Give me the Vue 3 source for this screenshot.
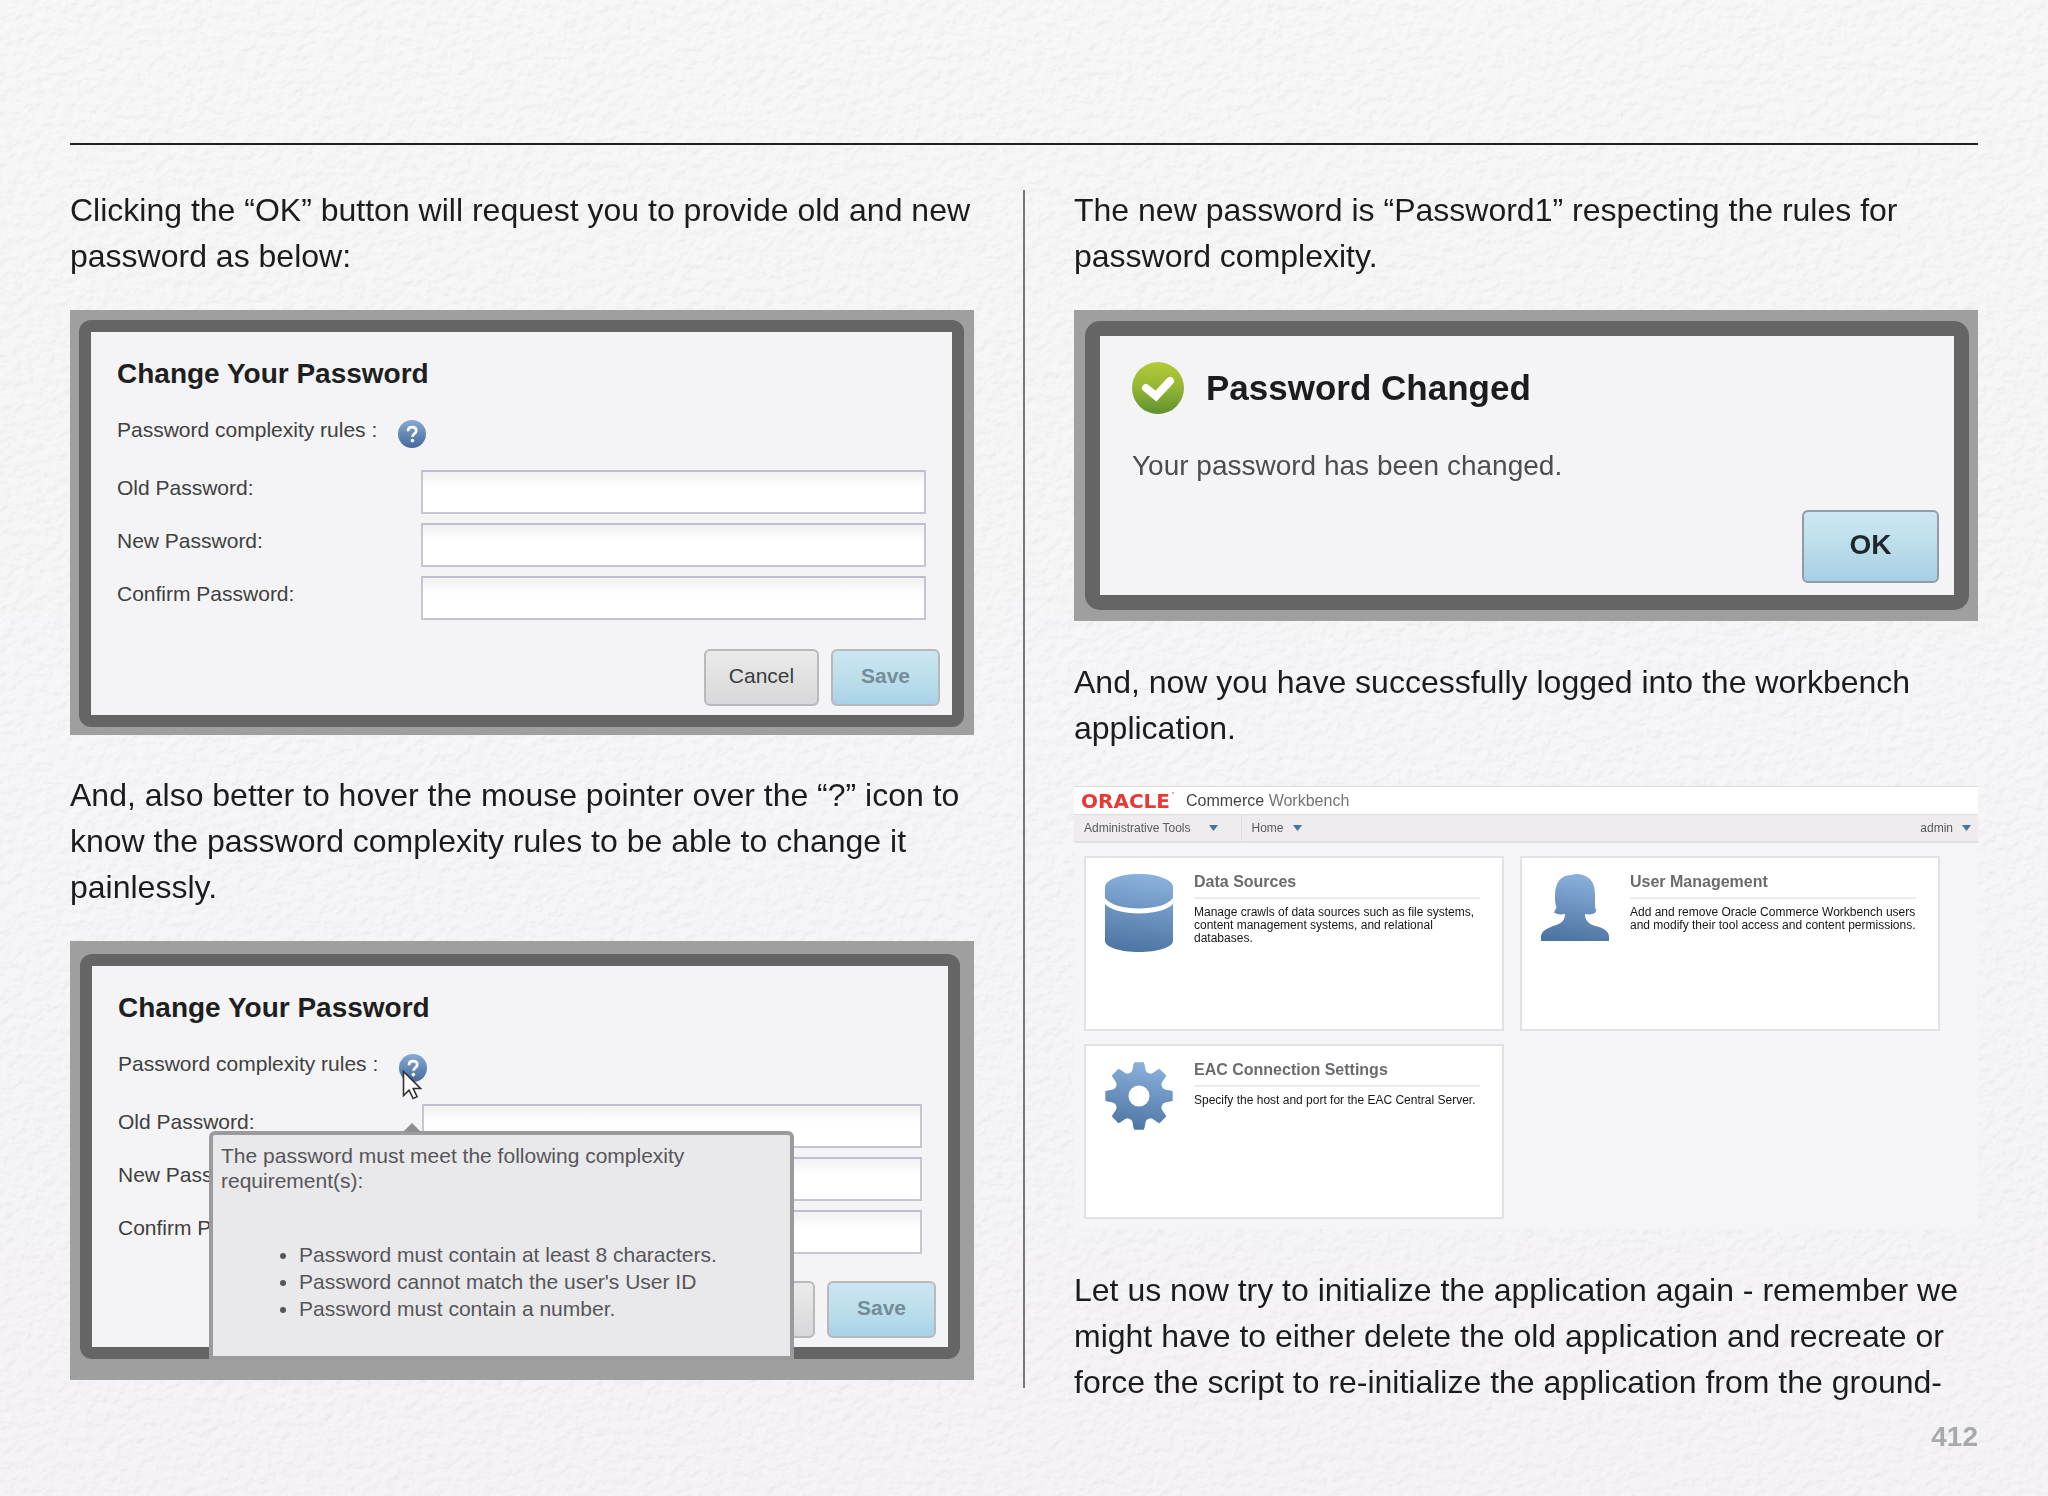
<template>
    <div class="page">
        <!-- paper grain -->
        <svg class="paper" aria-hidden="true">
            <filter id="grain" x="0" y="0" width="100%" height="100%" color-interpolation-filters="sRGB">
                <feTurbulence type="fractalNoise" baseFrequency="0.1 0.12" numOctaves="4" seed="8" result="noise" />
                <feDiffuseLighting in="noise" lighting-color="#ffffff" surfaceScale="1" diffuseConstant="1.12">
                    <feDistantLight azimuth="50" elevation="60" />
                </feDiffuseLighting>
            </filter>
            <rect width="100%" height="100%" filter="url(#grain)" />
        </svg>

        <hr class="topRule" />

        <main class="columns">
            <section class="column">
                <template v-for="d in dialogs" :key="d.id">
                    <p class="bodyText">{{ d.intro }}</p>
                    <div class="shot" :class="d.id">
                        <form class="dialog" @submit.prevent>
                            <h2 class="dialogTitle">Change Your Password</h2>
                            <div class="rulesRow">
                                <span class="rulesText">Password complexity rules :</span>
                                <button type="button" class="helpBtn" aria-label="Help">
                                    <svg viewBox="0 0 28 28" width="28" height="28">
                                        <defs>
                                            <linearGradient :id="'help' + d.id" x1="0" y1="0" x2="0" y2="1">
                                                <stop offset="0" stop-color="#86aad2" />
                                                <stop offset="1" stop-color="#45699a" />
                                            </linearGradient>
                                        </defs>
                                        <circle cx="14" cy="14" r="14" :fill="`url(#help${d.id})`" />
                                        <path d="M10 11.2C10 8.6 11.7 7.2 14.1 7.2s4.1 1.4 4.1 3.6c0 2.9-3.7 3.1-3.7 6"
                                            fill="none" stroke="#fff" stroke-width="2.8" />
                                        <circle cx="14.4" cy="20.6" r="1.8" fill="#fff" />
                                    </svg>
                                </button>
                                <svg v-if="d.tooltip" class="pointer" viewBox="0 0 20 30" width="20" height="30">
                                    <path d="M1.5 1.5v24l5.6-5.4 4 8.4 4-1.8-3.9-8.2h7.3z" fill="#fff" stroke="#333"
                                        stroke-width="1.6" />
                                </svg>
                            </div>
                            <div class="fields">
                                <template v-for="f in fields" :key="f">
                                    <label :for="d.id + f">{{ f }} Password:</label>
                                    <input :id="d.id + f" v-model="form[d.id + f]" type="password" />
                                </template>
                            </div>
                            <div class="actions">
                                <button type="button" class="btn cancel">Cancel</button>
                                <button type="submit" class="btn save">Save</button>
                            </div>
                            <div v-if="d.tooltip" class="tooltip" role="tooltip">
                                <p>The password must meet the following complexity requirement(s):</p>
                                <ul>
                                    <li v-for="r in rules" :key="r">{{ r }}</li>
                                </ul>
                            </div>
                        </form>
                    </div>
                </template>
            </section>

            <div class="divider"></div>

            <section class="column">
                <p class="bodyText">The new password is “Password1” respecting the rules for password complexity.</p>
                <div class="shot changed">
                    <div class="dialog">
                        <div class="changedHead">
                            <svg viewBox="0 0 52 52" width="52" height="52">
                                <defs>
                                    <linearGradient id="okGreen" x1="0" y1="0" x2="0" y2="1">
                                        <stop offset="0" stop-color="#b3cb3a" />
                                        <stop offset="0.5" stop-color="#94b533" />
                                        <stop offset="1" stop-color="#5f9130" />
                                    </linearGradient>
                                </defs>
                                <circle cx="26" cy="26" r="26" fill="url(#okGreen)" />
                                <path d="M14 26l10 8L38 19" fill="none" stroke="#fff" stroke-width="8"
                                    stroke-linecap="round" />
                            </svg>
                            <h2>Password Changed</h2>
                        </div>
                        <p class="changedText">Your password has been changed.</p>
                        <button type="button" class="btn ok">OK</button>
                    </div>
                </div>

                <p class="bodyText">And, now you have successfully logged into the workbench application.</p>
                <div class="workbench">
                    <header class="brandBar">
                        <span class="logo">ORACLE<i></i></span>
                        <span class="product">Commerce <span>Workbench</span></span>
                    </header>
                    <nav class="menuBar">
                        <button v-for="m in menus" :key="m" type="button" class="menuItem">
                            {{ m }}
                            <svg viewBox="0 0 9 6" width="9" height="6"><path d="M0 0h9L4.5 6z" fill="#47749f" /></svg>
                        </button>
                    </nav>
                    <div class="cards">
                        <article v-for="c in cards" :key="c.title" class="card">
                            <svg class="cardIcon" :viewBox="`0 0 68 ${c.height}`" width="68" :height="c.height">
                                <defs>
                                    <linearGradient :id="c.icon" gradientUnits="userSpaceOnUse" x1="40" y1="0" x2="28"
                                        :y2="c.height">
                                        <stop offset="0" stop-color="#8bb1dc" />
                                        <stop offset="1" stop-color="#4d75a3" />
                                    </linearGradient>
                                </defs>
                                <path v-for="p in c.paths" :key="p" :d="p" :fill="`url(#${c.icon})`"
                                    fill-rule="evenodd" />
                            </svg>
                            <div class="cardBody">
                                <h3>{{ c.title }}</h3>
                                <p>{{ c.text }}</p>
                            </div>
                        </article>
                    </div>
                </div>

                <p class="bodyText">Let us now try to initialize the application again - remember we might have to either delete the old application and recreate or force the script to re-initialize the application from the ground-</p>
            </section>
        </main>

        <footer class="pageNumber">412</footer>
    </div>
</template>

<script setup>
import { reactive } from 'vue'

const form = reactive({})
const fields = ['Old', 'New', 'Confirm']
const menus = ['Administrative Tools', 'Home', 'admin']

const dialogs = [
    { id: 'first', intro: 'Clicking the “OK” button will request you to provide old and new password as below:', tooltip: false },
    { id: 'second', intro: 'And, also better to hover the mouse pointer over the “?” icon to know the password complexity rules to be able to change it painlessly.', tooltip: true }
]

const rules = [
    'Password must contain at least 8 characters.',
    "Password cannot match the user's User ID",
    'Password must contain a number.'
]

// eight-tooth gear around a round hole
const gearPath = () => {
    const c = 34
    const pt = (r, deg) => {
        const a = (deg * Math.PI) / 180
        return `${(c + r * Math.cos(a)).toFixed(1)} ${(c + r * Math.sin(a)).toFixed(1)}`
    }
    const points = []
    for (let i = 0; i < 8; i++) {
        const m = i * 45 - 90
        points.push(pt(25, m - 18), pt(27, m - 14), pt(32, m - 10), pt(34, m - 8), pt(34, m + 8), pt(32, m + 10), pt(27, m + 14), pt(25, m + 18))
    }
    return `M${points.join('L')}ZM23.5 34a10.5 10.5 0 1 0 21 0a10.5 10.5 0 1 0 -21 0Z`
}

const cards = [
    {
        icon: 'database',
        title: 'Data Sources',
        text: 'Manage crawls of data sources such as file systems, content management systems, and relational databases.',
        height: 78,
        paths: ['M0 13C0 6 15 0 34 0s34 6 34 13v11c-5 7-19 10.5-34 10.5S5 31 0 24z', 'M0 30c6 6 19 9.5 34 9.5S62 36 68 30v37c0 6-15 11-34 11S0 73 0 67z']
    },
    {
        icon: 'person',
        title: 'User Management',
        text: 'Add and remove Oracle Commerce Workbench users and modify their tool access and content permissions.',
        height: 67,
        paths: ['M14 22C14 8 20 1 31 1c3-1.5 8-1 12 .5C51 4 54 11 54 21v13c1 1 1.5 2 1 3.5-1 2.500-6 3.5-11 2.5 0 6 3 9.500 9 11.5C62 54 67 56 68 62v5H0v-5c1-6 7-8 15-11 6-2 9-5 9-11-5 1-9 0-11-1.5.5-2 2-3 2.500-5C14 30 14 26 14 22z']
    },
    {
        icon: 'gear',
        title: 'EAC Connection Settings',
        text: 'Specify the host and port for the EAC Central Server.',
        height: 68,
        paths: [gearPath()]
    }
]
</script>

<style>
body {
    margin: 0;
    background: #f5f4f5;
}
</style>

<style scoped>
.page {
    position: relative;
    min-height: 100vh;
    box-sizing: border-box;
    padding: 143px 70px 0;
    font-family: 'Liberation Sans', Arial, sans-serif;
    color: #1c1b1d;
    background: linear-gradient(#f7f7f7, #f5f3f7);
}

.page > * {
    position: relative;
}

.page > .paper {
    position: absolute;
    inset: 0;
    width: 100%;
    height: 100%;
    opacity: 0.2;
    mix-blend-mode: multiply;
}

h2,
h3,
p,
ul {
    margin: 0;
}

button,
input {
    font-family: inherit;
}

.topRule {
    height: 2px;
    margin: 0 0 42px;
    border: none;
    background: #231f20;
}

.columns {
    display: flex;
    gap: 49px;
}

.column {
    flex: 1;
    min-width: 0;
}

.divider {
    width: 2px;
    margin: 3px 0 17px;
    background: #77767a;
}

.bodyText {
    font-size: 32px;
    line-height: 46px;
}

.shot {
    margin: 31px 0 38px;
    background: #9f9f9f;
}

.shot.first {
    padding: 10px 10px 8px 9px;
    margin-bottom: 37px;
}

.shot.second {
    padding: 13px 14px 21px 10px;
    margin-bottom: 0;
}

.dialog {
    position: relative;
    display: flex;
    flex-direction: column;
    border: 12px solid #666566;
    border-radius: 12px;
    background: #f4f4f6;
}

.dialogTitle {
    margin: 25px 26px;
    font-size: 28px;
    line-height: 34px;
    color: #1f1f1f;
}

.rulesRow {
    position: relative;
    display: flex;
    align-items: flex-end;
    gap: 21px;
    height: 32px;
    padding: 0 26px;
}

.rulesText,
.fields label {
    font-size: 21px;
    color: #404040;
}

.rulesText {
    line-height: 26px;
    padding-bottom: 5px;
}

.helpBtn {
    padding: 0;
    border: none;
    background: none;
    height: 28px;
}

.helpBtn svg,
.cardIcon {
    display: block;
}

.pointer {
    position: absolute;
    left: 310px;
    top: 20px;
    z-index: 2;
}

.fields {
    display: grid;
    grid-template-columns: 304px 1fr;
    row-gap: 9px;
    margin: 22px 26px 29px;
}

.second .fields {
    margin-bottom: 27px;
}

.fields label {
    line-height: 35px;
}

.fields input {
    box-sizing: border-box;
    width: 100%;
    height: 44px;
    border: 2px solid #c6c5d2;
    border-top-color: #bfbed0;
    background: linear-gradient(#f1f1f3, #ffffff 40%);
    outline: none;
}

.actions {
    display: flex;
    justify-content: flex-end;
    gap: 12px;
    padding: 0 12px 9px;
}

.btn {
    height: 57px;
    padding: 0 0 4px;
    border: 2px solid #b9b9bb;
    border-radius: 6px;
    font-size: 21px;
}

.cancel {
    width: 115px;
    color: #3c3c3c;
    background: linear-gradient(#ebebeb, #d8d7d9);
}

.save {
    width: 109px;
    font-weight: 700;
    color: #728c9a;
    background: linear-gradient(#cbe5f2, #bddfeb 50%, #a8d1e7);
}

.tooltip {
    position: absolute;
    left: 117px;
    top: 165px;
    width: 585px;
    height: 229px;
    box-sizing: border-box;
    padding: 8px 8px;
    border: 4px solid #9b9b9d;
    border-radius: 6px 6px 0 0;
    background: #e9e8ea;
    font-size: 21px;
    line-height: 25px;
    color: #57565a;
}

.tooltip::before {
    content: '';
    position: absolute;
    left: 190px;
    top: -12px;
    border: 9px solid transparent;
    border-top-width: 0;
    border-bottom-color: #8e8d90;
}

.tooltip p {
    width: 500px;
}

.tooltip ul {
    margin-top: 48px;
    padding-left: 78px;
    line-height: 27px;
}

.changed {
    padding: 11px 9px 11px 11px;
}

.changed .dialog {
    align-items: flex-start;
    padding: 26px 15px 12px 32px;
    border-width: 15px;
    border-radius: 15px;
}

.changedHead {
    display: flex;
    align-items: center;
    gap: 22px;
}

.changedHead h2 {
    font-size: 35px;
    line-height: 40px;
}

.changedText {
    margin: 35px 0 27px;
    font-size: 28px;
    line-height: 34px;
    color: #4d4c4e;
}

.ok {
    align-self: flex-end;
    width: 137px;
    height: 73px;
    border-color: #949ba2;
    font-size: 28px;
    font-weight: 700;
    color: #1f272c;
    background: linear-gradient(#cde6f5, #c3e2ed 30%, #a7cfe4);
}

.workbench {
    margin: 35px 0 38px;
    border-top: 1px solid #dcdbdd;
    background: #f5f4f7;
}

.brandBar {
    display: flex;
    align-items: center;
    gap: 16px;
    height: 27px;
    padding-left: 7px;
    background: #ffffff;
}

.logo {
    position: relative;
    font-family: 'DejaVu Sans', sans-serif;
    font-size: 20px;
    font-weight: 700;
    line-height: 26px;
    color: #e63a36;
}

.logo i {
    position: absolute;
    right: -4px;
    top: 4px;
    width: 2px;
    height: 2px;
    border-radius: 50%;
    background: #ee8d89;
}

.product {
    font-size: 16px;
    color: #454547;
}

.product span {
    color: #737276;
}

.menuBar {
    display: flex;
    height: 29px;
    box-sizing: border-box;
    border-top: 1px solid #dddce0;
    border-bottom: 2px solid #e1e0e4;
    background: #eeecef;
}

.menuItem {
    display: flex;
    align-items: center;
    gap: 9px;
    padding: 0 23px 0 10px;
    border: none;
    background: none;
    font-size: 12px;
    color: #5a595c;
}

.menuItem:first-child {
    gap: 18px;
    border-right: 1px solid #e0dfe2;
}

.menuItem:last-child {
    margin-left: auto;
    padding: 0 7px;
}

.cards {
    display: grid;
    grid-template-columns: 1fr 1fr;
    gap: 13px 16px;
    padding: 13px 38px 10px 10px;
}

.card {
    display: flex;
    align-items: flex-start;
    gap: 21px;
    height: 175px;
    box-sizing: border-box;
    padding: 16px 22px 0 19px;
    border: 2px solid #e2e1e5;
    background: #ffffff;
}

.cardBody {
    flex: 1;
}

.cardBody h3 {
    padding-bottom: 8px;
    border-bottom: 2px solid #ecebef;
    font-size: 16px;
    line-height: 15px;
    color: #6b6a6e;
}

.cardBody p {
    margin-top: 7px;
    font-size: 12px;
    line-height: 13px;
    color: #161616;
}

.pageNumber {
    margin-top: 14px;
    text-align: right;
    font-size: 28px;
    font-weight: 700;
    line-height: 36px;
    color: #a9a8aa;
}
</style>
